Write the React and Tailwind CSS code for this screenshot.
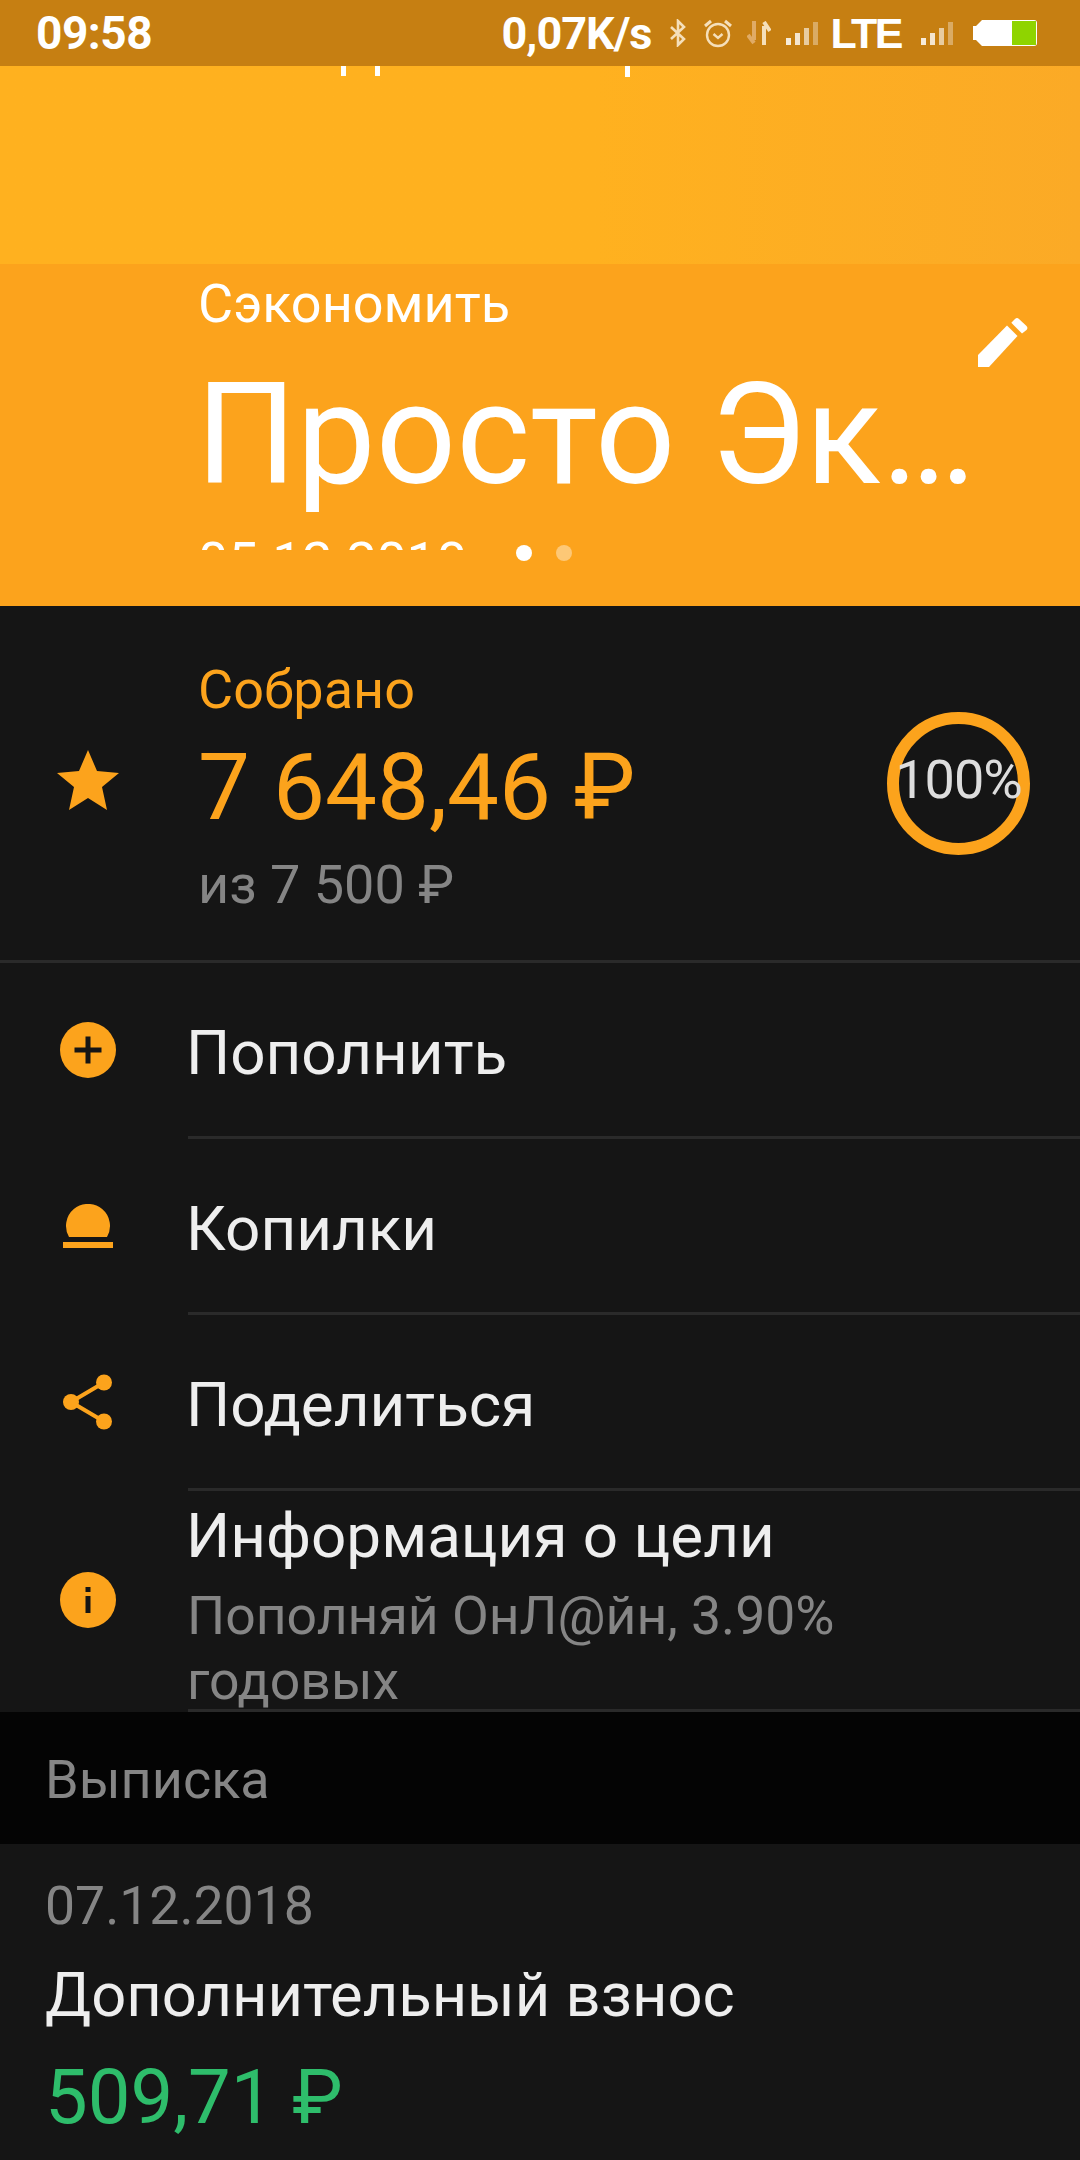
function Signal() {
  const bars = [
    ["M0 16h5v7H0z", 0.85],
    ["M9 11h5v12H9z", 0.8],
    ["M18 6h5v17h-5z", 0.6],
    ["M27 0h5v23h-5z", 0.35],
  ];
  return (
    <svg width="33" height="23" viewBox="0 0 33 23" fill="#fff">
      {bars.map(([d, o]) => <path key={d} d={d} opacity={o} />)}
    </svg>
  );
}

function StatusBar() {
  return (
    <div className="h-[66px] bg-[#c67f12] flex items-center pl-[36px] text-white font-bold shrink-0">
      <span className="text-[46px] leading-none tracking-[-0.5px]">09:58</span>
      <span className="ml-auto text-[45px] leading-none tracking-[-1px]">0,07K/s</span>
      <svg className="ml-[18px]" width="18" height="28" viewBox="0 0 18 28" fill="none" stroke="#f5dfba" strokeWidth="2.6">
        <path d="M2 8l13 12-6 6V2l6 6L2 20" />
      </svg>
      <svg className="ml-[16px]" width="30" height="30" viewBox="0 0 30 30" fill="none" stroke="#f5dfba" strokeWidth="2.4">
        <circle cx="15" cy="17" r="11" />
        <path d="M10.500 16l4.500 4 4.500-4" />
        <path d="M2 8l6-5M28 8l-6-5" strokeWidth="3" />
      </svg>
      <svg className="ml-[14px]" width="24" height="24" viewBox="0 0 24 24" fill="none">
        <path d="M7 0v19M1 14l6 8" stroke="#e0ab66" strokeWidth="4" />
        <path d="M17 24V5M23 10l-6-9" stroke="#f5dfba" strokeWidth="4" />
      </svg>
      <div className="ml-[15px] flex"><Signal /></div>
      <span className="ml-[11px] text-[43px] leading-none font-bold font-['Liberation_Sans',sans-serif] tracking-[-2.5px]">LTE</span>
      <div className="ml-[20px] flex"><Signal /></div>
      <svg className="ml-[18px] mr-[42px]" width="66" height="30" viewBox="0 0 66 30">
        <path d="M10 2h52a3 3 0 0 1 3 3v20a3 3 0 0 1-3 3H10l-6-6H1V8h3z" fill="#fff" />
        <rect x="40" y="3" width="24" height="24" fill="#8fd400" />
      </svg>
    </div>
  );
}

function CircleIcon({ kind }) {
  return (
    <svg width="56" height="56" viewBox="0 0 56 56">
      <circle cx="28" cy="28" r="28" fill="#fca31c" />
      {kind === "plus" ? (
        <path d="M25.500 14.500h5v11h11v5h-11v11h-5v-11h-11v-5h11z" fill="#151515" />
      ) : (
        <path d="M25.500 15h5v5h-5zM25.500 24h5v17h-5z" fill="#151515" />
      )}
    </svg>
  );
}

const icons = {
  plus: <CircleIcon kind="plus" />,
  info: <CircleIcon kind="info" />,
  coin: (
    <svg width="50" height="44" viewBox="0 0 50 44" fill="#fca31c">
      <path d="M6 33a22 22 0 1 1 38 0z" />
      <rect x="0" y="38" width="50" height="6" />
    </svg>
  ),
  share: (
    <svg width="50" height="56" viewBox="0 0 50 56" fill="#fca31c">
      <circle cx="8" cy="28" r="8" />
      <circle cx="41" cy="8.500" r="8" />
      <circle cx="41" cy="47.500" r="8" />
      <path d="M8 28L41 8.500M8 28l33 19.500" stroke="#fca31c" strokeWidth="4" />
    </svg>
  ),
};

function Row({ icon, title, subtitle, tall }) {
  return (
    <div className={`flex items-stretch ${tall ? "h-[221px]" : "h-[176px]"}`}>
      <div className="w-[188px] shrink-0 pl-[60px] flex items-center pb-[3px]">
        <div className="w-[56px] flex justify-center">{icons[icon]}</div>
      </div>
      <div className={`flex-1 border-b-[3px] border-[#2a2a2a] flex flex-col justify-center ${tall ? "pt-[18px]" : "pt-[7px]"}`}>
        <div className="-ml-[2px] text-[62px] leading-[60px] text-[#eeeeee]">{title}</div>
        {subtitle && (
          <div className="-ml-[1px] mt-[17px] w-[720px] text-[53.500px] leading-[65px] text-[#858585]">{subtitle}</div>
        )}
      </div>
    </div>
  );
}

export default function App() {
  return (
    <div className="w-[1080px] h-[2160px] overflow-hidden flex flex-col bg-[#151515] font-['Roboto',sans-serif]">
      <StatusBar />

      <div className="h-[198px] shrink-0 bg-gradient-to-r from-[#ffb11f] from-55% to-[#fbaa26] flex items-start pl-[341px]">
        <div className="w-[5px] h-[10px] bg-white" />
        <div className="w-[5px] h-[10px] bg-white ml-[29px]" />
        <div className="w-[5px] h-[11px] bg-white ml-[245px]" />
      </div>

      <div className="relative h-[342px] shrink-0 bg-[#fca31c] overflow-hidden pl-[198px] text-white">
        <div className="pt-[10px] text-[54px] leading-[60px]">Сэкономить</div>
        <div className="-ml-[2px] mt-[21px] text-[141px] leading-[160px] whitespace-nowrap">
          Просто Эк<span className="tracking-[-8px]">...</span>
        </div>
        <div className="h-[18px] overflow-hidden mt-[17px] text-[53.500px] leading-[60px]">05.12.2018</div>
        <svg className="absolute left-[978px] top-[53px]" width="50" height="50" viewBox="0 0 50 50" fill="#fff">
          <path d="M0 38L29 8.500l10.500 10.500L11 50H0z" />
          <path d="M33.300 5.700L37 2a3 3 0 0 1 4 0l7.500 7a3 3 0 0 1 0 4L44 16.600z" />
        </svg>
        <div className="absolute left-[516px] top-[281px] flex gap-[24px]">
          <div className="w-[16px] h-[16px] rounded-full bg-white" />
          <div className="w-[16px] h-[16px] rounded-full bg-white/40" />
        </div>
      </div>

      <div className="h-[354px] shrink-0 flex items-center">
        <div className="w-[198px] shrink-0 pl-[57px] pb-[6px]">
          <svg width="62" height="60" viewBox="0 0 62 60" fill="#fca31c">
            <path d="M31 0l9 21 22 2-17 14 5 23-19-12-19 12 5-23L0 23l22-2z" />
          </svg>
        </div>
        <div className="flex flex-col pt-[9px]">
          <div className="text-[54px] leading-[60px] text-[#fca31c]">Собрано</div>
          <div className="mt-[16px] text-[92.500px] leading-[104px] text-[#fca31c]">7 648,46 ₽</div>
          <div className="mt-[15px] text-[54px] leading-[60px] text-[#858585]">из 7 500 ₽</div>
        </div>
        <div className="ml-auto mr-[50px] w-[143px] h-[143px] rounded-full border-[12px] border-[#fca31c] flex items-center justify-center">
          <span className="pb-[6px] text-[54px] leading-none text-[#dddddd] whitespace-nowrap tracking-[-1px]">100%</span>
        </div>
      </div>

      <div className="h-[3px] shrink-0 bg-[#2a2a2a]" />

      <Row icon="plus" title="Пополнить" />
      <Row icon="coin" title="Копилки" />
      <Row icon="share" title="Поделиться" />
      <Row icon="info" title="Информация о цели" subtitle="Пополняй ОнЛ@йн, 3.90% годовых" tall />

      <div className="h-[132px] shrink-0 bg-[#040404] flex items-center pl-[45px] pt-[3px] text-[54px] text-[#858585]">Выписка</div>

      <div className="pl-[45px] pt-[32px]">
        <div className="text-[53.500px] leading-[60px] text-[#858585]">07.12.2018</div>
        <div className="mt-[24px] text-[61.500px] leading-[70px] text-[#eeeeee]">Дополнительный взнос</div>
        <div className="mt-[22px] text-[76px] leading-[90px] text-[#2ebd6b]">509,71 ₽</div>
      </div>
    </div>
  );
}
